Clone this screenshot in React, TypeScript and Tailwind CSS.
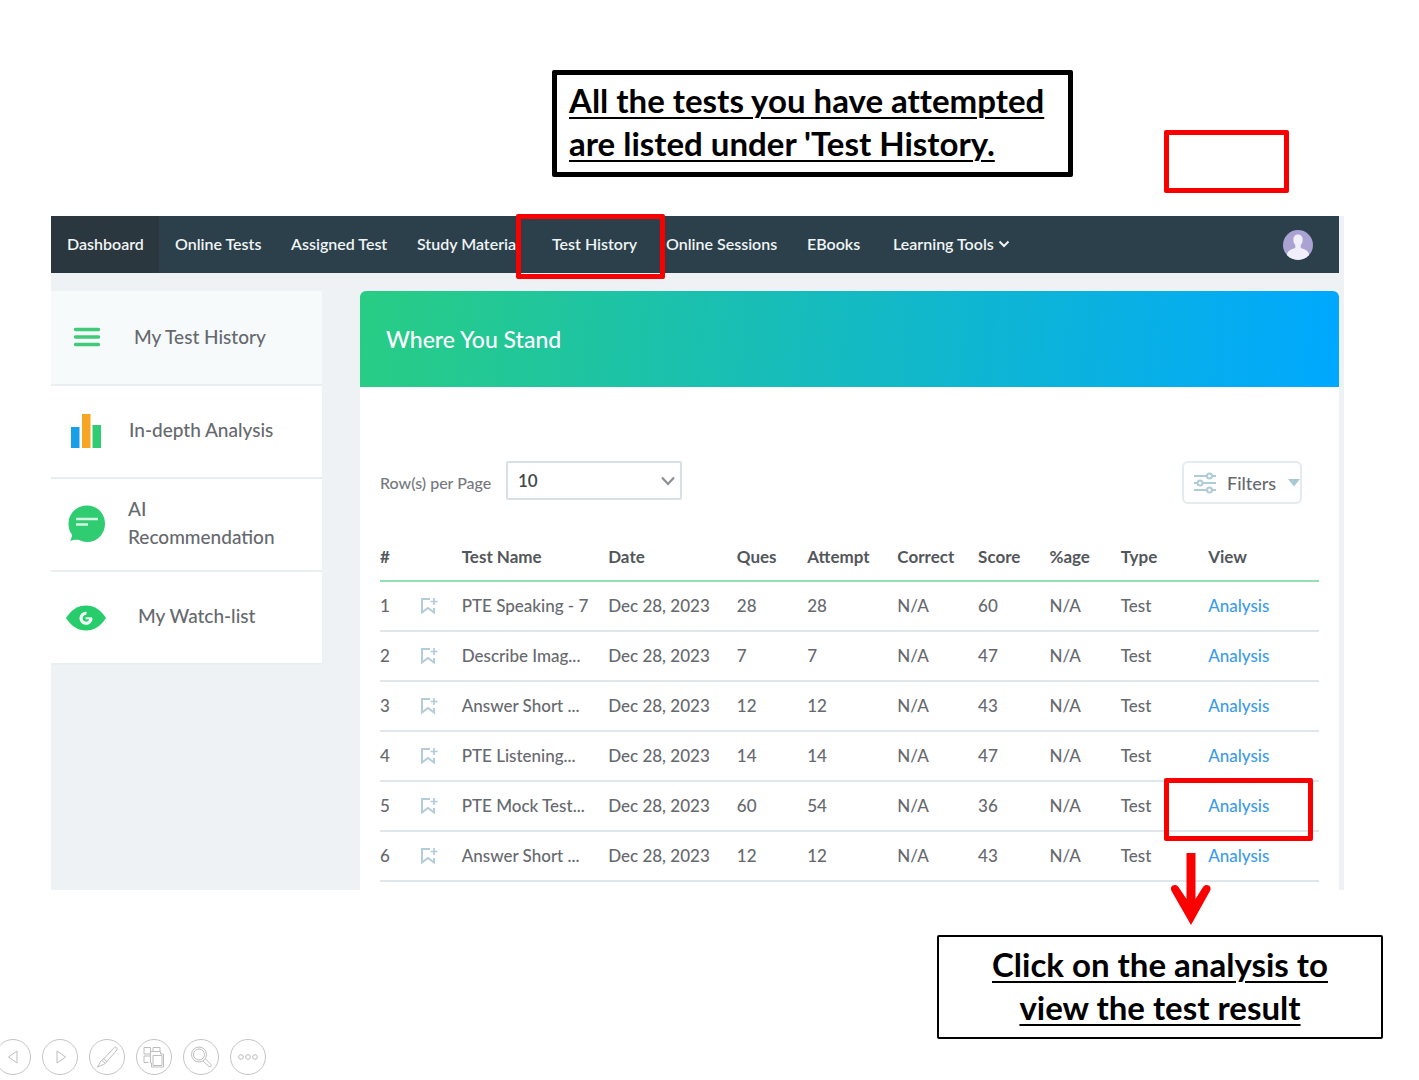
import type { ReactNode } from "react";

const navItems = [
  { label: "Dashboard", width: "w-[108px] bg-[#2a373f]" },
  { label: "Online Tests", width: "w-[116px]" },
  { label: "Assigned Test", width: "w-[126px]" },
  { label: "Study Material", width: "w-[135px]" },
  { label: "Test History", width: "w-[114px]", marked: true },
  { label: "Online Sessions", width: "w-[141px]" },
  { label: "EBooks", width: "w-[86px]" },
  { label: "Learning Tools", width: "w-[150px]", menu: true },
];

const columns = [
  { label: "#", width: "w-[4.3%]" },
  { label: "", width: "w-[4.4%]" },
  { label: "Test Name", width: "w-[15.6%]" },
  { label: "Date", width: "w-[13.7%]" },
  { label: "Ques", width: "w-[7.5%]" },
  { label: "Attempt", width: "w-[9.6%]" },
  { label: "Correct", width: "w-[8.6%]" },
  { label: "Score", width: "w-[7.6%]" },
  { label: "%age", width: "w-[7.6%]" },
  { label: "Type", width: "w-[9.3%]" },
  { label: "View", width: "w-[11.8%]" },
];

const tests = [
  { name: "PTE Speaking - 7", ques: 28, attempt: 28, score: 60 },
  { name: "Describe Imag...", ques: 7, attempt: 7, score: 47 },
  { name: "Answer Short ...", ques: 12, attempt: 12, score: 43 },
  { name: "PTE Listening...", ques: 14, attempt: 14, score: 47 },
  { name: "PTE Mock Test...", ques: 60, attempt: 54, score: 36 },
  { name: "Answer Short ...", ques: 12, attempt: 12, score: 43 },
];

function Avatar() {
  return (
    <svg viewBox="0 0 30 30" className="size-[30px]" aria-hidden="true">
      <defs>
        <clipPath id="avatar-clip">
          <circle cx="15" cy="15" r="15" />
        </clipPath>
      </defs>
      <circle cx="15" cy="15" r="15" fill="#a9a2d2" />
      <g clipPath="url(#avatar-clip)" fill="#f1eff9">
        <path d="M15 4.500c3 0 4.700 2 4.700 5 0 2.200-.7 4.300-2 5.600v2.700c1 1.200 7.300 1.700 8.300 6.200V30H4v-6c1-4.500 7.300-5 8.300-6.200v-2.700c-1.300-1.300-2-3.400-2-5.600 0-3 1.700-5 4.700-5z" />
      </g>
    </svg>
  );
}

function MenuIcon() {
  return (
    <svg viewBox="0 0 28 20" className="h-5 w-7" stroke="#41ca79" strokeWidth="3.500" strokeLinecap="round">
      <path d="M2.500 2.500h23M2.500 10h23M2.500 17.500h23" />
    </svg>
  );
}

function BarsIcon() {
  return (
    <svg viewBox="0 0 30 34" className="h-[34px] w-[30px]">
      <path d="M0 13h8.500v21H0z" fill="#189fe8" />
      <path d="M11 0h8.500v34H11z" fill="#f6a623" />
      <path d="M21.500 11H30v23h-8.500z" fill="#2fcc71" />
    </svg>
  );
}

function ChatIcon() {
  return (
    <svg viewBox="0 0 38 38" className="size-[38px]">
      <path
        d="M19 .5C29.200.5 37 8.500 37 18.700 37 29 29.200 37 19 37c-3 0-5.400-.7-7.800-1.900-3-.8-6.200-.3-9 1 .9-2.100 1.900-4.200 1.800-6.400C1.600 26.600.5 23 .5 18.700.5 8.500 8.700.5 19 .5z"
        fill="#2fcc71"
      />
      <path d="M8 14h22M8 19.500h12" stroke="#d5f6e2" strokeWidth="2.500" />
    </svg>
  );
}

function EyeIcon() {
  return (
    <svg viewBox="0 0 40 26" className="h-[26px] w-10">
      <path d="M0 13C5 5 12 .5 20 .5S35 5 40 13c-5 8-12 12.500-20 12.500S5 21 0 13z" fill="#27cc6b" />
      <path d="M20.500 8.300a5 5 0 1 0 4.500 5" fill="none" stroke="#f4fff8" strokeWidth="3.200" />
      <path d="M19.500 13.300h6.500" stroke="#f4fff8" strokeWidth="2" />
      <circle cx="23.500" cy="9.800" r="2.200" fill="#27cc6b" />
    </svg>
  );
}

function BookmarkPlus() {
  return (
    <svg viewBox="0 0 18 18" className="size-[18px]" fill="none" stroke="#b3ccda" strokeWidth="2">
      <path d="M10 2H2v13.500L8 11l6 4.500V11" />
      <path d="M14 1v7M10.500 4.500h7" strokeWidth="1.700" />
    </svg>
  );
}

function FilterIcon() {
  return (
    <svg viewBox="0 0 24 22" className="h-[22px] w-6" fill="#fff" stroke="#b0cbd8" strokeWidth="2">
      <path d="M1 4h22M1 11h22M1 18h22" />
      <circle cx="16.500" cy="4" r="2.500" />
      <circle cx="7" cy="11" r="2.500" />
      <circle cx="16.500" cy="18" r="2.500" />
    </svg>
  );
}

const sideItems = [
  { label: "My Test History", icon: <MenuIcon />, tone: "bg-[#f6fafb]", iconBox: "pl-[22px] pb-1", text: "pl-[83px]" },
  { label: "In-depth Analysis", icon: <BarsIcon />, tone: "bg-white", iconBox: "pl-5 pb-0.5", text: "pl-[78px]" },
  { label: "AI Recommendation", icon: <ChatIcon />, tone: "bg-white", iconBox: "pl-[17px] pb-0.5", text: "pl-[77px]" },
  { label: "My Watch-list", icon: <EyeIcon />, tone: "bg-white", iconBox: "pl-[15px]", text: "pl-[87px]" },
];

function SideLink({ label, icon, tone, iconBox, text }: (typeof sideItems)[number]) {
  return (
    <a href="#" className={`grid h-[93px] items-center border-b-2 border-[#e9eef0] ${tone}`}>
      <span className={`col-start-1 row-start-1 ${iconBox}`}>{icon}</span>
      <span className={`col-start-1 row-start-1 pr-8 pb-1 text-[19px] leading-7 font-medium text-[#66696e] ${text}`}>
        {label}
      </span>
    </a>
  );
}

function ShowButton({ label, children }: { label: string; children: ReactNode }) {
  return (
    <button type="button" aria-label={label} className="size-9 shrink-0 rounded-full border border-[#c4c4c4]">
      <svg viewBox="0 0 34 34" className="size-full" fill="none" stroke="#bdbdbd" strokeWidth="1">
        {children}
      </svg>
    </button>
  );
}

export default function App() {
  return (
    <div className="overflow-hidden bg-white font-['Lato',sans-serif]">
      <header className="flex h-[216px] items-start gap-[91px] pt-[70px] pl-[552px]">
        <p className="w-[521px] shrink-0 rounded-xs border-5 border-black pt-1 pr-2 pb-[7px] pl-3 text-[33px] leading-[43px] font-bold underline decoration-2 underline-offset-4 [font-variant-ligatures:none]">
          All the tests you have attempted are listed under 'Test History.
        </p>
        <div className="mt-[60px] h-[63px] w-[125px] shrink-0 rounded-xs border-5 border-[#f80000]" />
      </header>

      <div className="mr-[75px] ml-[51px] bg-[#eef2f5] pr-[5px]">
        <nav className="flex h-[57px] items-stretch bg-[#2b404b] text-base font-semibold text-[#f0f4f5]">
          {navItems.map((item) => (
            <div key={item.label} className={`relative flex shrink-0 items-center pb-0.5 pl-4 ${item.width}`}>
              <a href="#" className="whitespace-nowrap">
                {item.label}
              </a>
              {item.menu && (
                <svg viewBox="0 0 12 8" className="ml-1 h-2 w-3" fill="none" stroke="currentColor" strokeWidth="2">
                  <path d="M1.500 1.500 6 6l4.500-4.500" />
                </svg>
              )}
              {item.marked && (
                <span className="absolute -top-0.5 -left-5 z-10 h-[65px] w-[149px] rounded-xs border-5 border-[#f80000]" />
              )}
            </div>
          ))}
          <button type="button" aria-label="Account" className="mr-[26px] ml-auto">
            <Avatar />
          </button>
        </nav>

        <div className="flex items-start gap-[38px] pt-[18px]">
          <aside className="w-[271px] shrink-0 border-t-2 border-[#f6fafb]">
            {sideItems.map((item) => (
              <SideLink key={item.label} {...item} />
            ))}
          </aside>

          <main className="min-w-0 flex-1">
            <h1 className="flex h-24 items-center rounded-t-md bg-linear-95/srgb from-[#28cd84] to-[#00a8ff] pl-[26px] text-[23px] font-medium text-white">
              Where You Stand
            </h1>
            <div className="bg-white px-5 pt-[74px] pb-2">
              <div className="flex items-start">
                <label
                  htmlFor="rows"
                  className="w-[126px] pt-2.5 text-base leading-6 font-medium whitespace-nowrap text-[#75797d]"
                >
                  Row(s) per Page
                </label>
                <div className="grid w-44 items-center">
                  <select
                    id="rows"
                    defaultValue="10"
                    className="col-start-1 row-start-1 h-[39px] appearance-none rounded-xs border-2 border-[#d9e1e4] bg-white pl-2.5 text-[17px] font-semibold text-[#40464a]"
                  >
                    <option>10</option>
                    <option>25</option>
                    <option>50</option>
                  </select>
                  <svg
                    viewBox="0 0 14 10"
                    className="pointer-events-none col-start-1 row-start-1 mr-[7px] h-2.5 w-3.5 justify-self-end"
                    fill="none"
                    stroke="#8b8f92"
                    strokeWidth="2.200"
                  >
                    <path d="M1 1.500 7 8l6-6.500" />
                  </svg>
                </div>
                <button
                  type="button"
                  className="mr-[17px] ml-auto flex h-[43px] w-[120px] items-center overflow-hidden rounded-md border-2 border-[#e3ebee] pl-[9px] text-lg font-medium text-[#66696e]"
                >
                  <FilterIcon />
                  <span className="pl-2.5">Filters</span>
                  <svg viewBox="0 0 12 8" className="ml-auto h-2 w-3 shrink-0" fill="#a9c8d6">
                    <path d="M0 0h12L6 7.500z" />
                  </svg>
                </button>
              </div>

              <table className="mt-[27px] w-full table-fixed border-collapse text-left text-[17px] font-medium whitespace-nowrap text-[#66696e]">
                <thead>
                  <tr className="h-[50px] border-b-2 border-[#93e0b4] text-[#53575b]">
                    {columns.map((column, index) => (
                      <th key={index} scope="col" className={`p-0 pt-0.5 font-bold ${column.width}`}>
                        {column.label}
                      </th>
                    ))}
                  </tr>
                </thead>
                <tbody>
                  {tests.map((test, index) => (
                    <tr key={index} className="h-[50px] border-b-2 border-[#dfe7ea]">
                      <td className="p-0">{index + 1}</td>
                      <td className="p-0">
                        <button type="button" aria-label="Bookmark" className="block">
                          <BookmarkPlus />
                        </button>
                      </td>
                      <td className="p-0">{test.name}</td>
                      <td className="p-0">Dec 28, 2023</td>
                      <td className="p-0">{test.ques}</td>
                      <td className="p-0">{test.attempt}</td>
                      <td className="p-0">N/A</td>
                      <td className="p-0">{test.score}</td>
                      <td className="p-0">N/A</td>
                      <td className="p-0">Test</td>
                      <td className="relative p-0">
                        <a href="#" className="text-[#3d9be9]">
                          Analysis
                        </a>
                        {index === 4 && (
                          <>
                            <span className="absolute -top-1 -left-11 z-10 h-[63px] w-[149px] rounded-xs border-5 border-[#f80000]" />
                            <svg viewBox="0 0 42 72" className="absolute top-[71px] -left-[38px] z-10 h-[72px] w-[42px]">
                              <path
                                d="M16.500 0h9v46l7.500-12c2-3 6.200-2.500 7.300.3.500 1.400.3 2.700-.5 4L21 72 1.700 38.300c-.8-1.300-1-2.600-.5-4 1.100-2.800 5.300-3.300 7.300-.3l8 12z"
                                fill="#fa0000"
                              />
                            </svg>
                          </>
                        )}
                      </td>
                    </tr>
                  ))}
                </tbody>
              </table>
            </div>
          </main>
        </div>
      </div>

      <footer className="pt-[45px]">
        <p className="mr-9 ml-auto w-[446px] rounded-xs border-2 border-black px-10 pt-1.5 pb-2 text-center text-[33px] leading-[43px] font-bold underline decoration-2 underline-offset-4 [font-variant-ligatures:none]">
          Click on the analysis to view the test result
        </p>
        <div className="-ml-[5px] flex gap-[11px]">
          <ShowButton label="Previous slide">
            <path d="M21 11v12l-8.500-6z" />
          </ShowButton>
          <ShowButton label="Next slide">
            <path d="M14 11v12l8.500-6z" />
          </ShowButton>
          <ShowButton label="Pen">
            <path d="m13.500 19 11-11.500c1.500-1 3.500.8 2.400 2.500L17 21.500M13.500 19l3.500 2.500c-1.500 3-5.500 3.500-9.500 5.500 2-3 3-7 6-8zM12 20.500l3 2.500" />
          </ShowButton>
          <ShowButton label="All slides">
            <path d="M13.500 11.500V14H7V7.500h6.500zM16 11.500v-4h7v4M11.500 22.500H7V16h6.500" />
            <path d="M13.500 11.500h10v2.500h3v13h-12v-4h-1z" />
            <path d="M16 15.500h9v10h-9z" />
          </ShowButton>
          <ShowButton label="Zoom">
            <circle cx="15" cy="14.500" r="7.500" />
            <circle cx="15" cy="14.500" r="5.500" />
            <path d="m19 21 6 5.500c1.500 1 3-.8 2-2L21.500 19" />
          </ShowButton>
          <ShowButton label="More options">
            <circle cx="10" cy="17" r="2.300" />
            <circle cx="17" cy="17" r="2.300" />
            <circle cx="24" cy="17" r="2.300" />
          </ShowButton>
        </div>
      </footer>
    </div>
  );
}
